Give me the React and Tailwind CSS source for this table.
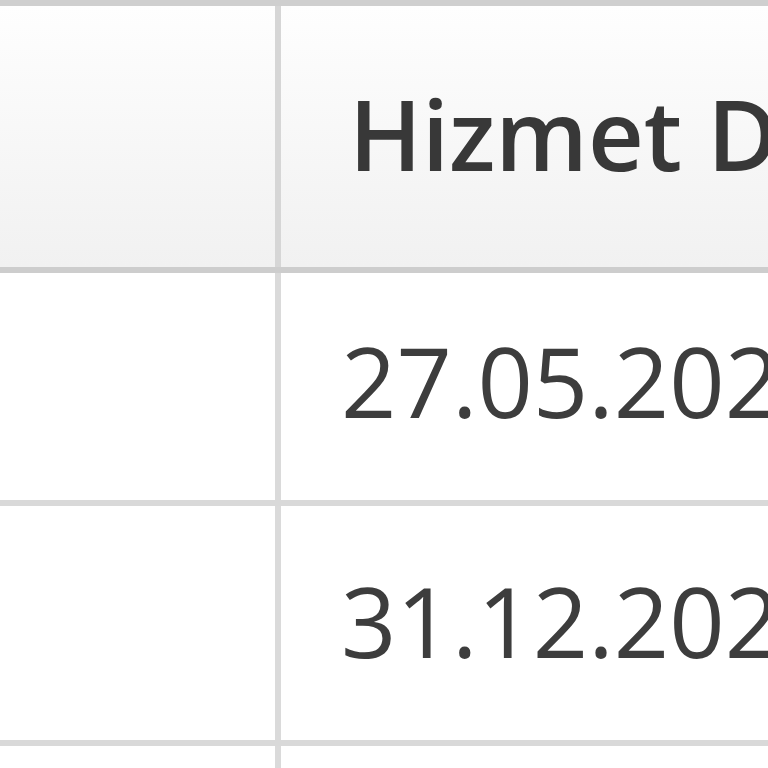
const ROWS = ["27.05.2024", "31.12.2024", "15.01.2025"];

export default function App() {
    return (
        <div
            className="w-[768px] h-[768px] overflow-hidden bg-white text-[#3d3d3d]"
            style={{ fontFamily: '"Open Sans", "Noto Sans", sans-serif' }}
        >
            <div className="w-[1600px] border-t-[6px] border-[#cfcfcf]">
                {/* Header */}
                <div className="flex h-[267px] border-b-[6px] border-[#cdcdcd] bg-gradient-to-b from-[#fefefe] to-[#f1f1f1]">
                    <div className="w-[281px] shrink-0 border-r-[6px] border-[#d6d6d6]" />
                    <div className="flex items-end pl-[68px] pb-[69px] text-[97px] leading-[130px] font-semibold text-[#383838] whitespace-nowrap">
                        Hizmet Dönemi
                    </div>
                </div>

                {/* Body rows */}
                {ROWS.map((date, i) => (
                    <div
                        key={date}
                        className={`flex border-b-[6px] border-[#d9d9d9] ${i === 0 ? "h-[233px]" : "h-[240px]"}`}
                    >
                        <div className="w-[281px] shrink-0 border-r-[6px] border-[#dadada]" />
                        <div className="flex items-end pl-[60px] pb-[55px] text-[97px] leading-[130px] whitespace-nowrap">
                            {date}
                        </div>
                    </div>
                ))}
            </div>
        </div>
    );
}
